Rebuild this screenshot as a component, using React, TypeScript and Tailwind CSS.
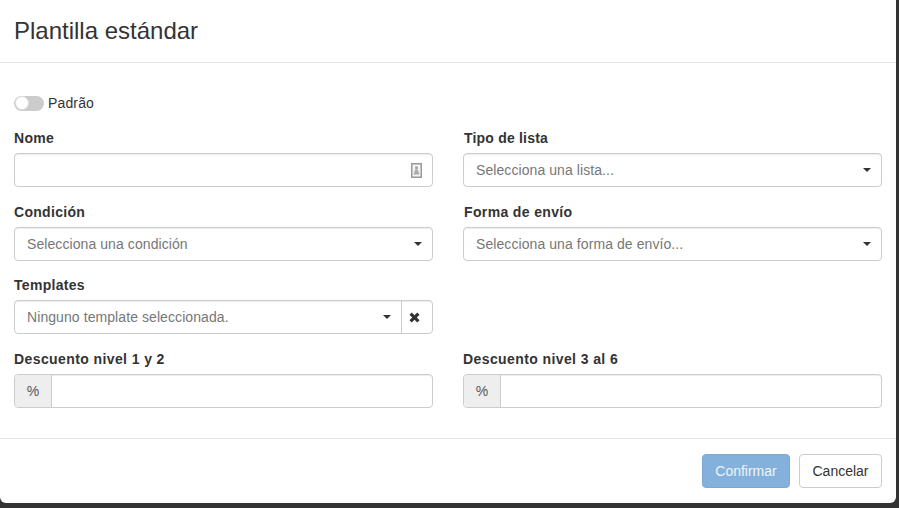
const labelClass = 'block text-[14px] leading-[20px] font-bold text-[#333] mb-[5px]';
const fieldClass = 'h-[34px] border border-[#ccc] rounded-[4px] bg-white shadow-[inset_0_1px_1px_rgba(0,0,0,0.075)]';

function Caret() {
	return <span className="w-0 h-0 border-x-[4px] border-x-transparent border-t-[4px] border-t-[#333]" />;
}

function SelectField({ label, placeholder, tracking = 'tracking-[0.3px]' }: { label: string; placeholder: string; tracking?: string }) {
	return (
		<div>
			<label className={`${labelClass} ${tracking}`}>{label}</label>
			<div className={`${fieldClass} flex items-center justify-between pl-[12px] pr-[10px]`}>
				<span className="text-[14px] tracking-[0.08px] text-[#777]">{placeholder}</span>
				<Caret />
			</div>
		</div>
	);
}

function PercentField({ label }: { label: string }) {
	return (
		<div>
			<label className={`${labelClass} tracking-[0.4px]`}>{label}</label>
			<div className={`${fieldClass} flex items-stretch`}>
				<span className="w-[37px] shrink-0 flex items-center justify-center bg-[#eee] border-r border-[#ccc] rounded-l-[3px] text-[14px] text-[#555]">
					%
				</span>
				<div className="flex-1" />
			</div>
		</div>
	);
}

export default function App() {
	return (
		<div className="h-[508px] w-[899px] bg-[#333] overflow-hidden font-['Liberation_Sans',Arial,sans-serif]">
			<div className="w-[896px] h-[503px] bg-white rounded-b-[6px] flex flex-col">
				<div className="h-[63px] shrink-0 border-b border-[#e5e5e5] px-[14px] flex items-center">
					<h4 className="text-[24px] leading-[26px] text-[#333]">Plantilla estándar</h4>
				</div>
				<div className="flex-1 px-[14px] pt-[30px]">
					<div className="flex items-center gap-[4px] h-[20px] mb-[15px]">
						<span className="relative w-[30px] h-[15px] rounded-full bg-[#ccc]">
							<span className="absolute left-[1px] top-[0.5px] w-[14px] h-[14px] rounded-full bg-white border border-[#ddd]" />
						</span>
						<span className="text-[14px] tracking-[0.15px] text-[#333]">Padrão</span>
					</div>
					<div className="grid grid-cols-[419px_419px] grid-rows-[74px_73px_74px_59px] gap-x-[30px]">
						<div>
							<label className={`${labelClass} tracking-[0.3px]`}>Nome</label>
							<div className={`${fieldClass} flex items-center justify-end pr-[10px]`}>
								<svg width="11" height="15" viewBox="0 0 11 15">
									<rect x="0.75" y="0.75" width="9.5" height="13.5" fill="#f4f4f4" stroke="#999" strokeWidth="1.5" />
									<rect x="4.25" y="3.5" width="2.5" height="3" fill="#999" />
									<path d="M4 7 H7 L8.5 11.5 H2.5 Z" fill="#aaa" />
								</svg>
							</div>
						</div>
						<SelectField label="Tipo de lista" placeholder="Selecciona una lista..." tracking="tracking-[0.2px] pl-[1px]" />
						<SelectField label="Condición" placeholder="Selecciona una condición" />
						<SelectField label="Forma de envío" placeholder="Selecciona una forma de envío..." tracking="tracking-[0.36px] pl-[1px]" />
						<div>
							<label className={`${labelClass} tracking-[0.3px]`}>Templates</label>
							<div className={`${fieldClass} flex items-stretch`}>
								<div className="flex-1 flex items-center justify-between pl-[12px] pr-[10px]">
									<span className="text-[14px] tracking-[0.08px] text-[#777]">Ninguno template seleccionada.</span>
									<Caret />
								</div>
								<div className="w-[31px] shrink-0 border-l border-[#ccc] flex items-center pl-[7px]">
									<svg width="11" height="11" viewBox="0 0 11 11">
										<path d="M1.6 1.6 L9.4 9.4 M9.4 1.6 L1.6 9.4" stroke="#333" strokeWidth="3.2" />
									</svg>
								</div>
							</div>
						</div>
						<div />
						<PercentField label="Descuento nivel 1 y 2" />
						<PercentField label="Descuento nivel 3 al 6" />
					</div>
				</div>
				<div className="h-[65px] shrink-0 border-t border-[#e5e5e5] flex items-center justify-end gap-[9px] pr-[14px]">
					<button className="h-[34px] w-[88px] rounded-[4px] bg-[#84b1dc] border border-[#7aa9d6] text-[14px] text-[#eef4fa]">
						Confirmar
					</button>
					<button className="h-[34px] w-[83px] rounded-[4px] bg-white border border-[#ccc] text-[14px] text-[#333]">
						Cancelar
					</button>
				</div>
			</div>
		</div>
	);
}
